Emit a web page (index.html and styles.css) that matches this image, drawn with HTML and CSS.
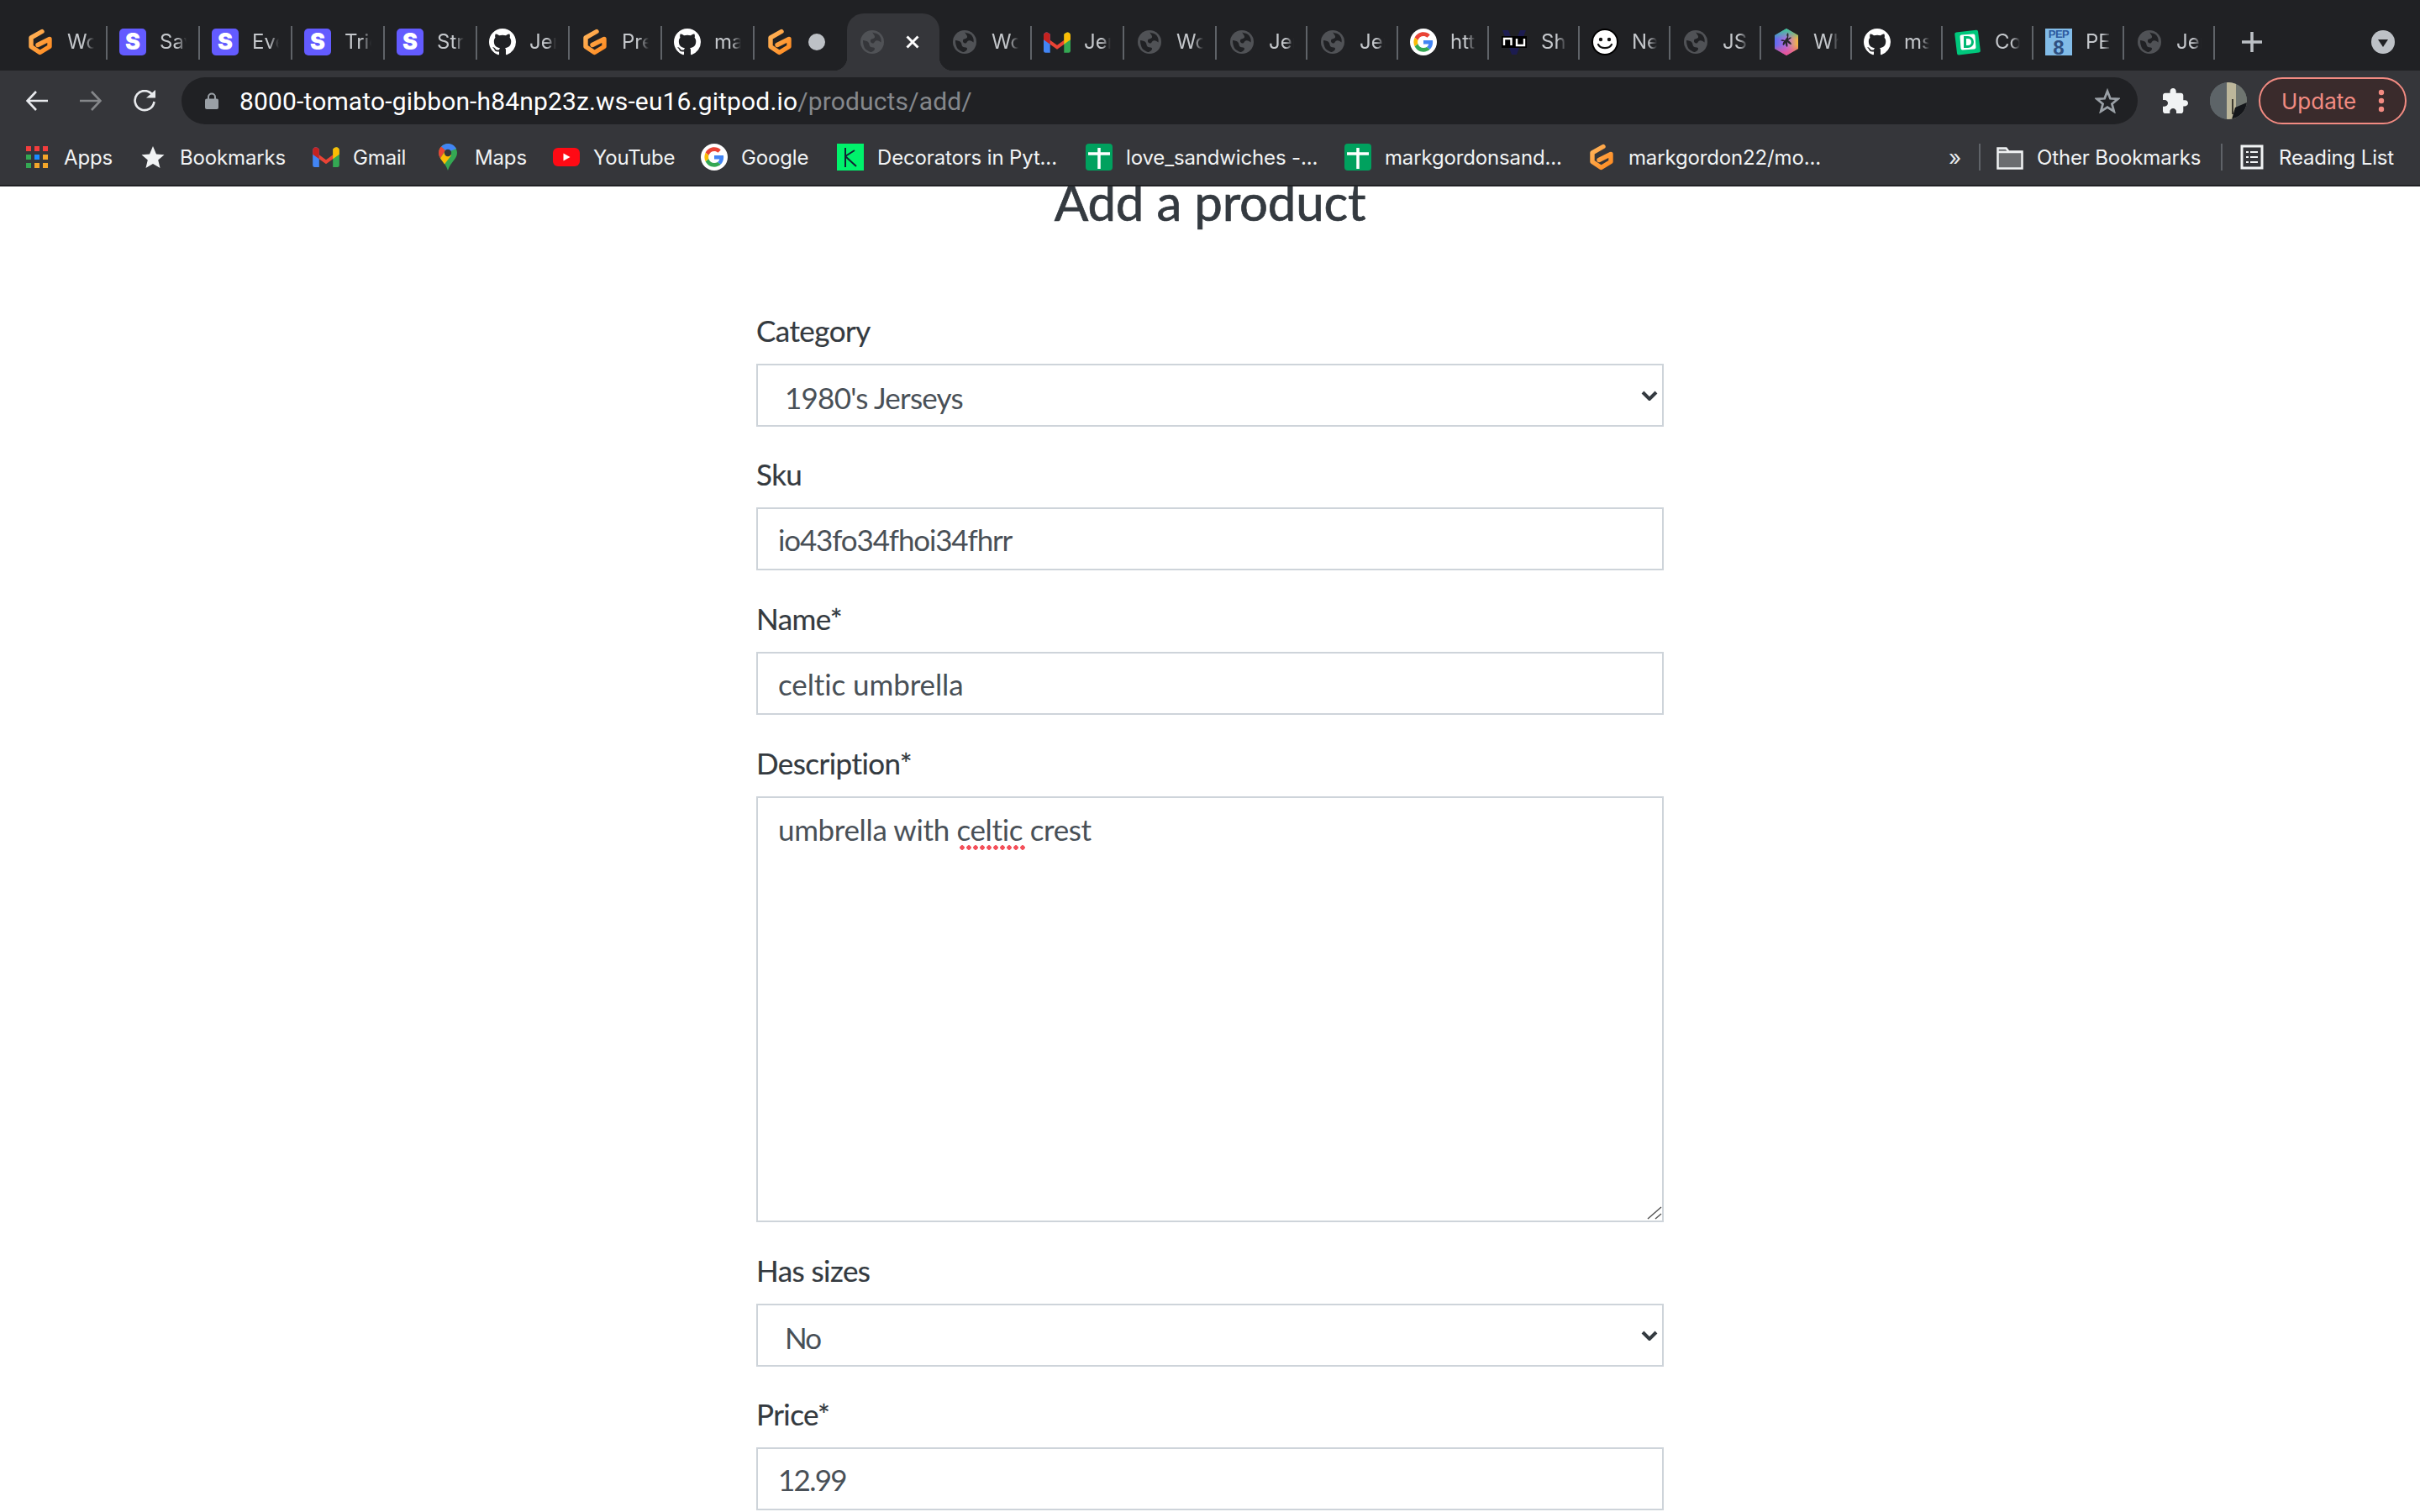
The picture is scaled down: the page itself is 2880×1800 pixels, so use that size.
FILE: index.html
```html
<!DOCTYPE html>
<html lang="en">
<head>
<meta charset="utf-8">
<title>Add a product</title>
<link rel="stylesheet" href="styles.css">
</head>
<body>
<svg class="defs" width="0" height="0" aria-hidden="true">
  <defs>
    <linearGradient id="gp" x1="0" y1="0" x2="1" y2="1"><stop offset="0" stop-color="#ffb45b"/><stop offset="1" stop-color="#ff8a1f"/></linearGradient>
    <linearGradient id="hexa" x1="0" y1="0" x2="1" y2="0"><stop offset="0" stop-color="#5a6cf0"/><stop offset=".5" stop-color="#b56be0"/><stop offset="1" stop-color="#f5b83d"/></linearGradient>
    <linearGradient id="hexb" x1="0" y1="0" x2="0" y2="1"><stop offset="0" stop-color="#2fd08f"/><stop offset=".4" stop-color="#2fd08f" stop-opacity="0"/><stop offset=".6" stop-color="#f0508c" stop-opacity="0"/><stop offset="1" stop-color="#f0508c"/></linearGradient>
    <symbol id="i-gitpod" viewBox="0 0 32 32"><path d="M18 3.500 5 10.800V21.500L15.500 28.500 27 21.500V12.500L13 19.500" fill="none" stroke="url(#gp)" stroke-width="5.400" stroke-linecap="round" stroke-linejoin="round"/></symbol>
    <symbol id="i-github" viewBox="0 0 16 16"><path fill="#fff" d="M8 0C3.58 0 0 3.58 0 8c0 3.54 2.29 6.53 5.47 7.59.4.07.55-.17.55-.38 0-.19-.01-.82-.01-1.49-2.01.37-2.53-.49-2.69-.94-.09-.23-.48-.94-.82-1.13-.28-.15-.68-.52-.01-.53.63-.01 1.08.58 1.23.82.72 1.21 1.87.87 2.33.66.07-.52.28-.87.51-1.07-1.78-.2-3.64-.89-3.64-3.95 0-.87.31-1.59.82-2.15-.08-.2-.36-1.02.08-2.12 0 0 .67-.21 2.2.82.64-.18 1.32-.27 2-.27.68 0 1.36.09 2 .27 1.53-1.04 2.2-.82 2.2-.82.44 1.1.16 1.92.08 2.12.51.56.82 1.27.82 2.15 0 3.07-1.87 3.75-3.65 3.95.29.25.54.73.54 1.48 0 1.07-.01 1.93-.01 2.2 0 .21.15.46.55.38A8.013 8.013 0 0016 8c0-4.42-3.58-8-8-8z"/></symbol>
    <symbol id="i-globe" viewBox="0 0 28 28"><circle cx="14" cy="14" r="14" fill="#505256"/><path d="M14 2.500c2.500 1 7 1 9 4.500 1.500 2.500 2 4.500 1.500 7.500-1.500-1-3.500-3-6-2-2 .8-1.500 3-4 3-1.500 0-3-1.500-2.500-3.500.6-2.200 4-1.500 5-3.500.7-1.500-1.500-3.500-3-6.500z" fill="currentColor"/><path d="M3 12c2.500.5 5 .5 6.500 2.500 1.500 2 .5 4.500 3 5.500 2 .8 4.500 0 4.500 2s-3 4-5 4c-3-1.500-6-2.500-7.500-6C3.500 17.500 3 15 3 12z" fill="currentColor"/></symbol>
    <symbol id="i-gmail" viewBox="0 0 29 22"><path d="M0 3.500 14.500 14 29 3.500V8L14.500 18.500 0 8z" fill="#ea4335"/><path d="M0 3.500C0 .800 3 -.800 5.500 1L7 2.200V22H2a2 2 0 0 1-2-2z" fill="#4285f4"/><path d="M29 3.500C29 .800 26 -.800 23.500 1L22 2.200V22h5a2 2 0 0 0 2-2z" fill="#34a853"/><path d="M22 2.200 23.500 1C26 -.800 29 .800 29 3.500V8l-7 5z" fill="#fbbc05"/><path d="M0 3.500C0 .800 3 -.800 5.500 1L7 2.200V13L0 8z" fill="#c5221f"/></symbol>
    <symbol id="i-google" viewBox="-9 -9 66 66"><circle cx="24" cy="24" r="33" fill="#fff"/><path fill="#EA4335" d="M24 9.500c3.540 0 6.710 1.220 9.210 3.600l6.850-6.850C35.900 2.380 30.470 0 24 0 14.620 0 6.510 5.380 2.560 13.220l7.980 6.190C12.430 13.720 17.740 9.500 24 9.500z"/><path fill="#4285F4" d="M46.980 24.550c0-1.570-.15-3.090-.38-4.550H24v9.020h12.940c-.58 2.960-2.260 5.480-4.780 7.180l7.730 6c4.510-4.180 7.090-10.360 7.090-17.650z"/><path fill="#FBBC05" d="M10.530 28.590c-.48-1.450-.76-2.990-.76-4.590s.27-3.140.76-4.590l-7.980-6.190C.92 16.460 0 20.120 0 24c0 3.880.92 7.540 2.560 10.780l7.970-6.190z"/><path fill="#34A853" d="M24 48c6.480 0 11.930-2.130 15.890-5.810l-7.730-6c-2.150 1.450-4.920 2.300-8.160 2.300-6.260 0-11.570-4.220-13.470-9.910l-7.980 6.190C6.510 42.620 14.620 48 24 48z"/></symbol>
    <symbol id="i-sheet" viewBox="0 0 32 32"><rect width="32" height="32" rx="4" fill="#00a15e"/><path d="M3 12h26M16 5v25" stroke="#fff" stroke-width="3.500"/></symbol>
  </defs>
</svg>

<header class="browser">
  <div class="tabstrip">
    <div class="tab"><svg class="fav"><use href="#i-gitpod"/></svg><span class="tab-title">Wor</span></div>
    <div class="tab"><span class="fav stripe">S</span><span class="tab-title">Sav</span></div>
    <div class="tab"><span class="fav stripe">S</span><span class="tab-title">Eve</span></div>
    <div class="tab"><span class="fav stripe">S</span><span class="tab-title">Trig</span></div>
    <div class="tab"><span class="fav stripe">S</span><span class="tab-title">Stri</span></div>
    <div class="tab"><svg class="fav"><use href="#i-github"/></svg><span class="tab-title">Jer</span></div>
    <div class="tab"><svg class="fav"><use href="#i-gitpod"/></svg><span class="tab-title">Pre</span></div>
    <div class="tab"><svg class="fav"><use href="#i-github"/></svg><span class="tab-title">mar</span></div>
    <div class="tab tab-unsaved"><svg class="fav"><use href="#i-gitpod"/></svg><span class="dot"></span></div>
    <div class="tab tab-active"><svg class="fav globe"><use href="#i-globe"/></svg><svg class="close" viewBox="0 0 16 16"><path d="M1.500 1.500l13 13M14.500 1.500l-13 13"/></svg></div>
    <div class="tab"><svg class="fav globe"><use href="#i-globe"/></svg><span class="tab-title">Wor</span></div>
    <div class="tab"><svg class="fav fav-gmail"><use href="#i-gmail"/></svg><span class="tab-title">Jer</span></div>
    <div class="tab"><svg class="fav globe"><use href="#i-globe"/></svg><span class="tab-title">Wor</span></div>
    <div class="tab tab-narrow"><svg class="fav globe"><use href="#i-globe"/></svg><span class="tab-title">Jer</span></div>
    <div class="tab tab-narrow"><svg class="fav globe"><use href="#i-globe"/></svg><span class="tab-title">Jer</span></div>
    <div class="tab tab-narrow"><svg class="fav"><use href="#i-google"/></svg><span class="tab-title">http</span></div>
    <div class="tab tab-narrow"><svg class="fav" viewBox="0 0 32 32"><path d="M2 2h7l7 17 7-17h7L19 31h-6z" fill="#1c1c50"/><rect x="1" y="9" width="30" height="14" fill="#000"/><path d="M4 20v-8h8.500v8M19 12v8h9v-8" fill="none" stroke="#fff" stroke-width="2.400"/></svg><span class="tab-title">Sho</span></div>
    <div class="tab tab-narrow"><svg class="fav" viewBox="0 0 32 32"><circle cx="16" cy="16" r="15" fill="#fff" stroke="#000" stroke-width="2"/><circle cx="11" cy="13" r="2.200" fill="#111"/><circle cx="21" cy="13" r="2.200" fill="#111"/><path d="M8 19c3 5.500 13 5.500 16 0" fill="none" stroke="#111" stroke-width="2.200" stroke-linecap="round"/></svg><span class="tab-title">New</span></div>
    <div class="tab tab-narrow"><svg class="fav globe"><use href="#i-globe"/></svg><span class="tab-title">JS</span></div>
    <div class="tab tab-narrow"><svg class="fav" viewBox="0 0 32 32"><path d="M16 0 30 8v16l-14 8-14-8V8z" fill="url(#hexa)"/><path d="M16 0 30 8v16l-14 8-14-8V8z" fill="url(#hexb)"/><path d="M18 5c-2 1-2 3-1 5l-3 4c-2-1-4-1-5 0 1 1 3 1 4 1-1 2-2 3-1 5 1 0 2-2 3-3 0 2 0 4 2 5 1-2 0-4 0-6 1 1 3 3 5 3 0-2-2-4-4-5l4-3c-1-1-3 0-4 1 0-2 1-4 0-7z" fill="#26262c"/></svg><span class="tab-title">Whi</span></div>
    <div class="tab tab-narrow"><svg class="fav"><use href="#i-github"/></svg><span class="tab-title">msg</span></div>
    <div class="tab tab-narrow"><svg class="fav" viewBox="0 0 32 32"><rect x="1.500" y="3" width="28" height="27" rx="2" fill="#00c77c" transform="rotate(-7 16 16)"/><rect x="7" y="7" width="18" height="18" rx="2" fill="#fff" transform="rotate(-4 16 16)"/><path d="M12.500 10.500h3.500a5 5 0 0 1 0 11h-3.500z" fill="none" stroke="#00b873" stroke-width="3"/></svg><span class="tab-title">Cod</span></div>
    <div class="tab tab-narrow"><span class="fav pep"><span class="pep-top">PEP</span><span class="pep-num">8</span></span><span class="tab-title">PEP</span></div>
    <div class="tab tab-narrow"><svg class="fav globe"><use href="#i-globe"/></svg><span class="tab-title">Jer</span></div>
    <svg class="new-tab" viewBox="0 0 24 24"><path d="M12 0v24M0 12h24"/></svg>
    <svg class="tab-search" viewBox="0 0 28 28"><circle cx="14" cy="14" r="14" fill="#bdc1c6"/><path d="M8 11h12l-6 9z" fill="#202124"/></svg>
  </div>

  <div class="toolbar">
    <svg class="nav-icon" viewBox="0 0 26 26"><path d="M26 13H2M12 2 1.500 13 12 24" fill="none" stroke="#e8eaed" stroke-width="2.600"/></svg>
    <svg class="nav-icon nav-forward" viewBox="0 0 26 26"><path d="M0 13h24M14 2l10.500 11L14 24" fill="none" stroke="#85878a" stroke-width="2.600"/></svg>
    <svg class="nav-icon nav-reload" viewBox="0 0 26 26"><path d="M22.500 6A11.500 11.500 0 1 0 24.500 14" fill="none" stroke="#e8eaed" stroke-width="2.600"/><path d="M15 9.500 26 0v9.500z" fill="#e8eaed"/></svg>
    <div class="omnibox">
      <svg class="lock" viewBox="0 0 16 20"><path d="M4 9V5.500a4 4 0 0 1 8 0V9" fill="none" stroke="#9aa0a6" stroke-width="2"/><rect y="7.500" width="16" height="12.500" rx="2" fill="#9aa0a6"/></svg>
      <span class="url"><span class="url-host">8000-tomato-gibbon-h84np23z.ws-eu16.gitpod.io</span><span class="url-path">/products/add/</span></span>
      <svg class="bookmark-star" viewBox="0 0 30 30"><path d="M15 3.500 18.400 12.300 27.500 12.800 20.400 18.700 22.800 27.600 15 22.500 7.200 27.600 9.600 18.700 2.500 12.800 11.600 12.300z" fill="none" stroke="#9aa0a6" stroke-width="2.700"/></svg>
    </div>
    <svg class="puzzle" viewBox="2 1 21 21"><path fill="#f1f3f4" d="M20.500 11H19V7c0-1.100-.9-2-2-2h-4V3.500C13 2.120 11.880 1 10.500 1S8 2.120 8 3.500V5H4c-1.100 0-1.990.9-1.990 2v3.800H3.500c1.490 0 2.700 1.210 2.700 2.700s-1.210 2.700-2.700 2.700H2V20c0 1.100.9 2 2 2h3.800v-1.500c0-1.490 1.210-2.700 2.700-2.700 1.490 0 2.700 1.210 2.700 2.700V22H17c1.100 0 2-.9 2-2v-4h1.500c1.380 0 2.500-1.120 2.500-2.500S21.880 11 20.500 11z"/></svg>
    <svg class="avatar" viewBox="0 0 44 44"><clipPath id="av"><circle cx="22" cy="22" r="22"/></clipPath><g clip-path="url(#av)"><rect width="44" height="44" fill="#6a7070"/><rect x="0" width="20" height="44" fill="#5d6468"/><rect x="20" width="11" height="44" fill="#bdb79b"/><rect x="31" width="13" height="44" fill="#6f7570"/><path d="M26 44 30 30 44 24V44z" fill="#14161a"/><path d="M26 20h2v18h-2z" fill="#3d3a30"/></g></svg>
    <div class="update"><span class="update-label">Update</span><svg class="update-menu" viewBox="0 0 8 28"><circle cx="4" cy="4" r="3.200"/><circle cx="4" cy="14" r="3.200"/><circle cx="4" cy="24" r="3.200"/></svg></div>
  </div>

  <nav class="bookmarks">
    <a class="bm"><svg class="bm-icon" viewBox="-3 -3 32 32"><g fill="#f33d3d"><rect width="6" height="6"/><rect x="10" width="6" height="6"/><rect x="20" width="6" height="6"/></g><rect y="10" width="6" height="6" fill="#34a853"/><rect x="10" y="10" width="6" height="6" fill="#1a8cff"/><rect x="20" y="10" width="6" height="6" fill="#f4a62a"/><rect y="20" width="6" height="6" fill="#34a853"/><rect x="10" y="20" width="6" height="6" fill="#f4a62a"/><rect x="20" y="20" width="6" height="6" fill="#f4a62a"/></svg><span>Apps</span></a>
    <a class="bm"><svg class="bm-icon" viewBox="0 0 32 32"><path d="M16 3 20 12.500 29.500 13.200 22.200 19.500 24.500 29 16 24 7.500 29 9.800 19.500 2.500 13.200 12 12.500z" fill="#f1f3f4"/></svg><span>Bookmarks</span></a>
    <a class="bm"><svg class="bm-icon bm-gmail"><use href="#i-gmail"/></svg><span>Gmail</span></a>
    <a class="bm"><svg class="bm-icon" viewBox="-5 0 32 32"><path d="M11 0C5 0 0 5 0 11c0 7.500 8 11 11 21 3-10 11-13.500 11-21C22 5 17 0 11 0z" fill="#34a853"/><path d="M3 3.500C5 1.300 8 0 11 0c4 0 8 2 10 6l-7.500 3C12.500 7.500 10 7 8 8z" fill="#4285f4"/><path d="M3 3.500C1 5.500 0 8 0 11c0 2.500 1 4.500 2 6.500L8 8z" fill="#ea4335"/><path d="M2 17.500c1.500 2.500 3.500 4.500 5 7l8-10.500-7-5.500z" fill="#fbbc05"/><circle cx="11" cy="11" r="4.200" fill="#35363a"/></svg><span>Maps</span></a>
    <a class="bm"><svg class="bm-icon" viewBox="0 0 32 32"><rect y="5" width="32" height="22" rx="6" fill="#ff0a14"/><path d="M12.500 11.500 20.500 16 12.500 20.500z" fill="#fff"/></svg><span>YouTube</span></a>
    <a class="bm"><svg class="bm-icon"><use href="#i-google"/></svg><span>Google</span></a>
    <a class="bm"><svg class="bm-icon" viewBox="0 0 32 32"><rect width="32" height="32" fill="#00f26b"/><path d="M10 5v23M10 15 21 8M10 15l13 12" fill="none" stroke="#123" stroke-width="2"/></svg><span>Decorators in Pyt...</span></a>
    <a class="bm"><svg class="bm-icon"><use href="#i-sheet"/></svg><span>love_sandwiches -...</span></a>
    <a class="bm"><svg class="bm-icon"><use href="#i-sheet"/></svg><span>markgordonsand...</span></a>
    <a class="bm"><svg class="bm-icon"><use href="#i-gitpod"/></svg><span>markgordon22/mo...</span></a>
    <span class="bm-more">»</span>
    <span class="bm-sep"></span>
    <a class="bm"><svg class="bm-icon" viewBox="0 0 32 32"><path d="M1.500 5.500h10l3 4h16v20h-29z" fill="#6b6d70" stroke="#f1f3f4" stroke-width="2.500"/><path d="M1.500 10h29" stroke="#f1f3f4" stroke-width="2.500"/></svg><span>Other Bookmarks</span></a>
    <span class="bm-sep"></span>
    <a class="bm"><svg class="bm-icon" viewBox="0 0 32 32"><rect x="4" y="3" width="24" height="26" fill="none" stroke="#f1f3f4" stroke-width="3"/><path d="M9 10h3M9 16h3M9 22h3M14 10h9M14 16h9M14 22h9" stroke="#f1f3f4" stroke-width="2"/></svg><span>Reading List</span></a>
  </nav>
</header>

<main class="page">
  <h1 class="title">Add a product</h1>
  <form class="product-form">
    <div class="field">
      <label class="label" for="category">Category</label>
      <div class="select-wrap">
        <select class="control control-select" id="category"><option>1980's Jerseys</option></select>
        <svg class="chevron" viewBox="0 0 20 12"><path d="M2 2l8 8 8-8"/></svg>
      </div>
    </div>
    <div class="field">
      <label class="label" for="sku">Sku</label>
      <input class="control control-code" id="sku" type="text" value="io43fo34fhoi34fhrr" spellcheck="false">
    </div>
    <div class="field">
      <label class="label" for="name">Name*</label>
      <input class="control control-name" id="name" type="text" value="celtic umbrella" spellcheck="false">
    </div>
    <div class="field">
      <label class="label" for="description">Description*</label>
      <div class="textarea-wrap">
        <textarea class="control control-area" id="description" spellcheck="false">umbrella with celtic crest</textarea>
        <span class="spell"></span>
        <svg class="grip" viewBox="0 0 18 16"><path d="M1 15 17 1M10 15l7-6"/></svg>
      </div>
    </div>
    <div class="field">
      <label class="label" for="sizes">Has sizes</label>
      <div class="select-wrap">
        <select class="control control-select control-short" id="sizes"><option>No</option></select>
        <svg class="chevron" viewBox="0 0 20 12"><path d="M2 2l8 8 8-8"/></svg>
      </div>
    </div>
    <div class="field">
      <label class="label" for="price">Price*</label>
      <input class="control control-num" id="price" type="text" value="12.99" spellcheck="false">
    </div>
  </form>
</main>
</body>
</html>
```

FILE: styles.css
```css
* { box-sizing: border-box; }
html, body { margin: 0; padding: 0; }
body {
  width: 2880px;
  height: 1800px;
  overflow: hidden;
  background: #fff;
  font-family: Inter, "Liberation Sans", sans-serif;
}
.defs { position: absolute; }

/* ---------- browser chrome ---------- */
.browser { height: 222px; background: #35363a; border-bottom: 2px solid #202124; }

.tabstrip {
  display: flex;
  height: 84px;
  padding: 16px 0 0 18px;
  background: #202124;
}
.tab {
  position: relative;
  flex: none;
  display: flex;
  align-items: center;
  width: 110px;
  height: 68px;
  padding: 0 16px 0 14px;
  color: #202124;
}
.tab::after {
  content: "";
  position: absolute;
  right: 0;
  top: 15px;
  width: 2px;
  height: 40px;
  background: #5f6368;
}
.tab-narrow { width: 108px; }
.tab-unsaved::after { display: none; }
.tab-active {
  background: #35363a;
  border-radius: 20px 20px 0 0;
  color: #35363a;
}
.tab-active::after { display: none; }
.tab-active::before {
  content: "";
  position: absolute;
  left: -16px;
  right: -16px;
  bottom: 0;
  height: 16px;
  background:
    radial-gradient(circle at 0 0, #202124 16px, #35363a 16.500px) left / 16px 16px no-repeat,
    radial-gradient(circle at 100% 0, #202124 16px, #35363a 16.500px) right / 16px 16px no-repeat;
}
.fav { flex: none; display: block; width: 32px; height: 32px; }
.globe { width: 28px; height: 28px; margin: 0 2px; }
.fav-gmail { height: 25px; }
.tab-title {
  flex: 1;
  min-width: 0;
  margin-left: 16px;
  overflow: hidden;
  white-space: nowrap;
  font-size: 24px;
  line-height: 32px;
  color: #c4c7cb;
  -webkit-mask-image: linear-gradient(to right, #000 65%, transparent 100%);
  mask-image: linear-gradient(to right, #000 65%, transparent 100%);
}
.stripe {
  border-radius: 5px;
  background: #635bff;
  color: #fff;
  font-size: 27px;
  font-weight: 900;
  line-height: 32px;
  text-align: center;
}
.pep {
  display: flex;
  flex-direction: column;
  align-items: center;
  background: #82bce8;
  color: #2d5a9e;
  font-family: "Liberation Sans", sans-serif;
  font-weight: 700;
  overflow: hidden;
}
.pep-top { font-size: 13px; line-height: 13px; letter-spacing: -0.500px; }
.pep-num { font-size: 24px; line-height: 19px; color: #2f4f80; }
.dot {
  flex: none;
  width: 20px;
  height: 20px;
  margin-left: 18px;
  border-radius: 50%;
  background: #bdc1c6;
}
.close {
  flex: none;
  width: 16px;
  height: 16px;
  margin-left: 24px;
  fill: none;
  stroke: #fff;
  stroke-width: 3;
}
.new-tab {
  flex: none;
  width: 24px;
  height: 24px;
  margin: 22px 0 0 32px;
  fill: none;
  stroke: #bdc1c6;
  stroke-width: 3.500;
}
.tab-search {
  flex: none;
  width: 28px;
  height: 28px;
  margin: 20px 0 0 130px;
}

.toolbar {
  display: flex;
  align-items: center;
  height: 56px;
  margin-top: 8px;
  padding-left: 31px;
}
.nav-icon { flex: none; width: 26px; height: 26px; margin-top: 0; }
.nav-forward { margin-left: 38px; }
.nav-reload { margin-left: 38px; }
.omnibox {
  flex: none;
  display: flex;
  align-items: center;
  width: 2328px;
  height: 56px;
  margin-left: 31px;
  padding: 0 21px 0 28px;
  border-radius: 28px;
  background: #202124;
}
.lock { flex: none; width: 16px; height: 20px; }
.url {
  flex: 1;
  margin-left: 25px;
  font-family: Roboto, Inter, sans-serif;
  font-size: 30px;
  letter-spacing: 0.150px;
  white-space: nowrap;
}
.url-host { color: #fff; }
.url-path { color: #85888c; }
.bookmark-star { flex: none; width: 30px; height: 30px; }
.puzzle { flex: none; width: 30px; height: 30px; margin-left: 30px; }
.avatar { flex: none; width: 44px; height: 44px; margin-left: 26px; }
.update {
  flex: none;
  display: flex;
  align-items: center;
  width: 176px;
  height: 56px;
  margin-left: 14px;
  padding: 0 24px 0 25px;
  border: 2.500px solid #f28b82;
  border-radius: 28px;
  background: #3a2b2c;
}
.update-label {
  flex: 1;
  font-size: 26px;
  color: #f28b82;
}
.update-menu { flex: none; width: 8px; height: 28px; fill: #f28b82; }

.bookmarks {
  display: grid;
  grid-template-columns: 138px 206px 145px 141px 176px 162px 296px 308px 290px 429px 36px 21px 267px 21px auto;
  align-items: center;
  height: 72px;
  padding: 6px 0 0 28px;
  font-size: 24px;
  letter-spacing: -0.150px;
  color: #f1f3f4;
  white-space: nowrap;
}
.bm { display: flex; align-items: center; gap: 16px; }
.bm-icon { flex: none; display: block; width: 32px; height: 32px; }
.bm-gmail { height: 24px; }
.bm-more { font-size: 26px; color: #e8eaed; }
.bm-sep { width: 2px; height: 32px; background: #5f6368; }

/* ---------- page ---------- */
.page { height: 1578px; overflow: hidden; background: #fff; }
.title {
  margin: -18px 0 0;
  font-family: Lato, "Open Sans", sans-serif;
  font-size: 60px;
  font-weight: 400;
  line-height: 72px;
  letter-spacing: -0.200px;
  text-align: center;
  color: #343a40;
  -webkit-text-stroke: 0.700px #343a40;
}
.product-form { width: 1080px; margin: 89.500px auto 0; }
.field { margin-bottom: 29.800px; }
.label {
  display: block;
  height: 54px;
  margin-bottom: 13px;
  font-family: Lato, "Open Sans", sans-serif;
  font-size: 35px;
  line-height: 54px;
  letter-spacing: -0.550px;
  color: #343a40;
  -webkit-text-stroke: 0.200px #343a40;
}
.control {
  display: block;
  width: 1080px;
  height: 75px;
  margin: 0;
  padding: 0 24px;
  border: 2px solid #ced4da;
  border-radius: 0;
  outline: none;
  background: #fff;
  font-family: Lato, "Open Sans", sans-serif;
  font-size: 35px;
  letter-spacing: -0.360px;
  color: #495057;
}
.control-code { letter-spacing: -1.150px; }
.control-name { letter-spacing: -0.100px; }
.control-num { letter-spacing: -1.700px; }
.control-select {
  appearance: none;
  -webkit-appearance: none;
  padding: 6px 0 0 32px;
  letter-spacing: -0.750px;
}
.control-short { letter-spacing: -2px; }
.control-area {
  height: 507px;
  padding: 10px 24px;
  line-height: 54px;
  resize: none;
}
.select-wrap, .textarea-wrap { position: relative; }
.chevron {
  position: absolute;
  right: 7px;
  top: 32px;
  width: 20px;
  height: 12px;
  fill: none;
  stroke: #343a40;
  stroke-width: 4;
}
.spell {
  position: absolute;
  left: 241px;
  top: 58px;
  width: 80px;
  height: 6px;
  background: radial-gradient(circle at center, #f4505a 2.500px, transparent 3px) left / 8px 6px repeat-x;
}
.grip {
  position: absolute;
  right: 2px;
  bottom: 3px;
  width: 18px;
  height: 16px;
  fill: none;
  stroke: #555;
  stroke-width: 1.500;
}
```
